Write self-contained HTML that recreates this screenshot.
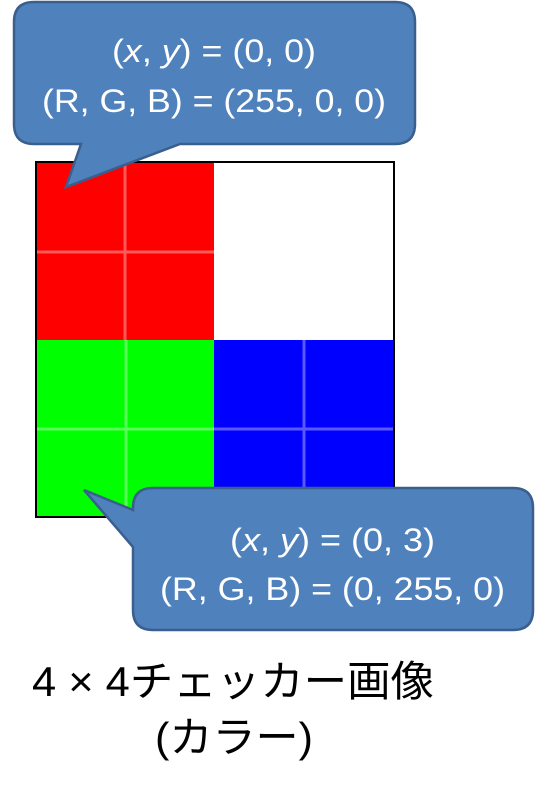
<!DOCTYPE html>
<html><head><meta charset="utf-8"><style>
html,body{margin:0;padding:0;background:#fff;width:535px;height:794px;overflow:hidden}
svg{display:block}
</style></head><body>
<svg width="535" height="794" viewBox="0 0 535 794" xmlns="http://www.w3.org/2000/svg">
<rect x="0" y="0" width="535" height="794" fill="#fff"/>
<rect x="36" y="162" width="358" height="355" fill="#fff" stroke="#000" stroke-width="2"/>
<rect x="37" y="163" width="177" height="177" fill="#ff0000"/>
<rect x="37" y="340" width="177" height="176" fill="#00ff00"/>
<rect x="214" y="340" width="179" height="176" fill="#0000ff"/>
<g stroke-width="3" opacity="0.35">
<line x1="125" y1="163" x2="125" y2="340" stroke="#fff"/>
<line x1="37" y1="252" x2="214" y2="252" stroke="#fff"/>
<line x1="126" y1="340" x2="126" y2="516" stroke="#fff"/>
<line x1="37" y1="429" x2="214" y2="429" stroke="#fff"/>
<line x1="304" y1="340" x2="304" y2="516" stroke="#fff"/>
<line x1="214" y1="429" x2="393" y2="429" stroke="#fff"/>
</g>
<path d="M34,2 H395 Q415,2 415,22 V124 Q415,144 395,144 H180 L66,187 L81,144 H34 Q14,144 14,124 V22 Q14,2 34,2 Z" fill="#4f81bd" stroke="#3a5f8e" stroke-width="2.5"/>
<g font-family="'Liberation Sans','DejaVu Sans',sans-serif" font-size="32" fill="#fff">
<text x="112" y="62" textLength="204" lengthAdjust="spacingAndGlyphs">(<tspan font-style="italic">x</tspan>, <tspan font-style="italic">y</tspan>) = (0, 0)</text>
<text x="42" y="112" textLength="344" lengthAdjust="spacingAndGlyphs">(R, G, B) = (255, 0, 0)</text>
</g>
<path d="M153,488 H513 Q533,488 533,508 V610 Q533,630 513,630 H153 Q133,630 133,610 V547 L84,490 L133,510 V508 Q133,488 153,488 Z" fill="#4f81bd" stroke="#3a5f8e" stroke-width="2.5"/>
<g font-family="'Liberation Sans','DejaVu Sans',sans-serif" font-size="32" fill="#fff">
<text x="230" y="551" textLength="205" lengthAdjust="spacingAndGlyphs">(<tspan font-style="italic">x</tspan>, <tspan font-style="italic">y</tspan>) = (0, 3)</text>
<text x="160" y="600" textLength="345" lengthAdjust="spacingAndGlyphs">(R, G, B) = (0, 255, 0)</text>
</g>
<g font-family="'Liberation Sans','Noto Sans CJK JP',sans-serif" font-size="42" fill="#000">
<text x="32" y="696" textLength="402" lengthAdjust="spacingAndGlyphs">4 × 4チェッカー画像</text>
<text x="155" y="752" textLength="158" lengthAdjust="spacingAndGlyphs">(カラー)</text>
</g>
</svg>
</body></html>
